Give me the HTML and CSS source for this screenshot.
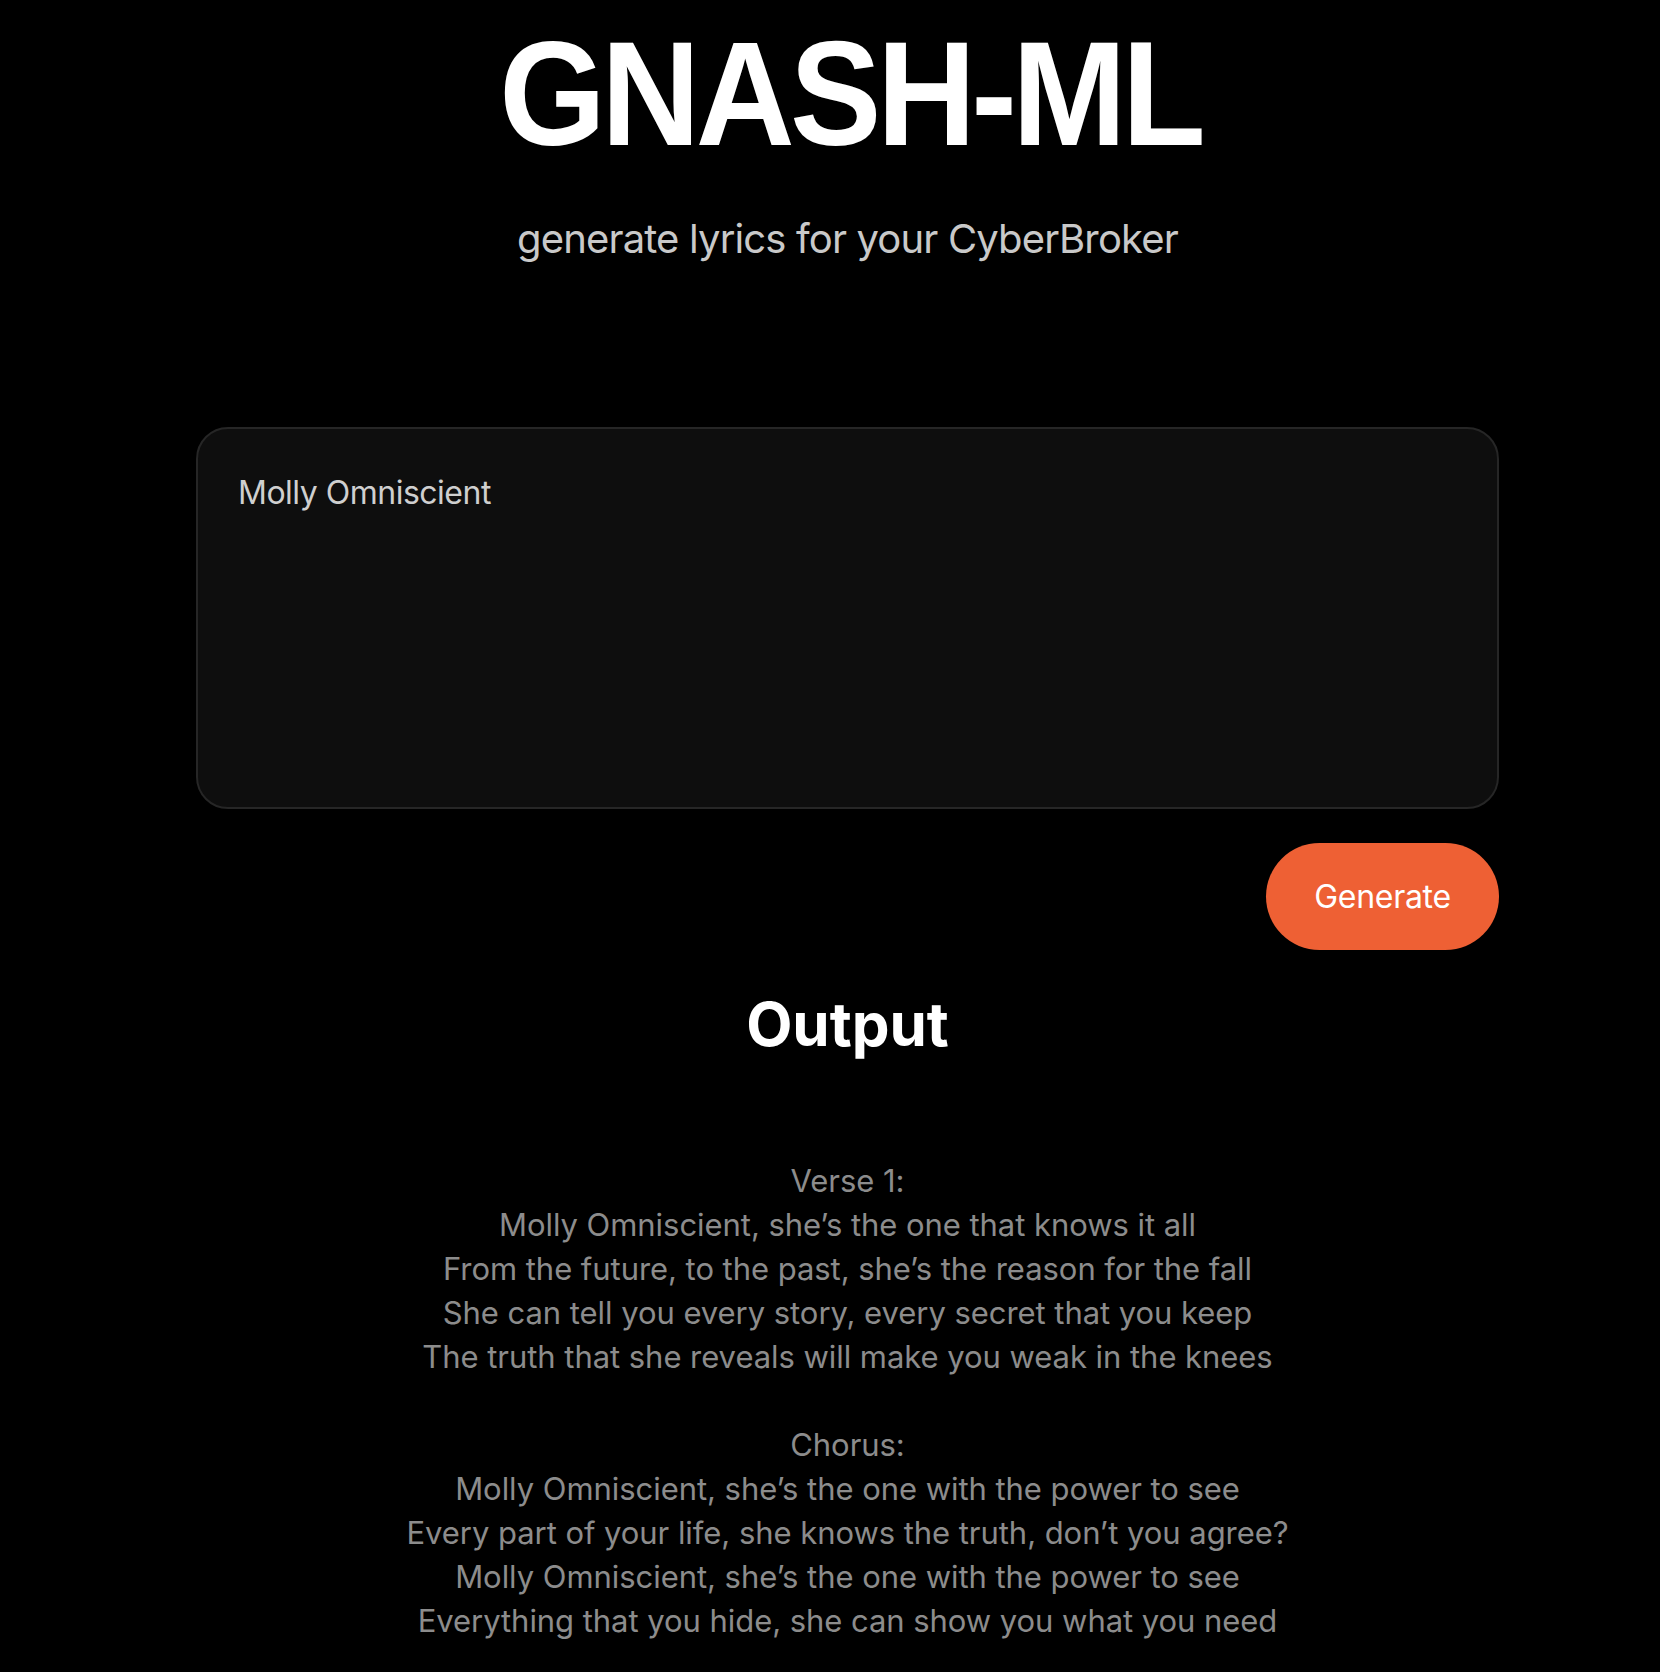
FILE: index.html
```html
<!DOCTYPE html>
<html lang="en">
<head>
<meta charset="utf-8">
<title>GNASH-ML</title>
<link rel="stylesheet" href="styles.css">
</head>
<body>
<main class="page">
  <h1 class="title">GNASH-ML</h1>
  <p class="subtitle">generate lyrics for your CyberBroker</p>
  <div class="prompt">Molly Omniscient</div>
  <div class="actions">
    <button class="generate" type="button">Generate</button>
  </div>
  <h2 class="output-title">Output</h2>
  <div class="lyrics">
    <p>Verse 1:<br>Molly Omniscient, she’s the one that knows it all<br>From the future, to the past, she’s the reason for the fall<br>She can tell you every story, every secret that you keep<br>The truth that she reveals will make you weak in the knees</p>
    <p>Chorus:<br>Molly Omniscient, she’s the one with the power to see<br>Every part of your life, she knows the truth, don’t you agree?<br>Molly Omniscient, she’s the one with the power to see<br>Everything that you hide, she can show you what you need</p>
  </div>
</main>
</body>
</html>
```

FILE: styles.css
```css
html, body {
  margin: 0;
  padding: 0;
  background: #000;
}

body {
  font-family: Inter, "Noto Sans", sans-serif;
  color: #fff;
  overflow: hidden;
}

.page {
  width: 1303px;
  margin-left: 196px;
  display: flex;
  flex-direction: column;
  align-items: center;
}

.title {
  margin: 0;
  padding: 19px 0 0 6px;
  font-family: "Liberation Sans", Arial, sans-serif;
  font-weight: 700;
  font-size: 149px;
  line-height: 149px;
  letter-spacing: -5px;
  color: #fff;
  transform: scaleX(0.92);
}

.subtitle {
  margin: 47px 0 0;
  font-size: 40px;
  line-height: 48px;
  letter-spacing: -0.85px;
  color: #c9c9c9;
}

.prompt {
  box-sizing: border-box;
  align-self: stretch;
  margin-top: 164px;
  height: 382px;
  padding: 44px 40px;
  background: #0e0e0e;
  border: 2px solid #262626;
  border-radius: 32px;
  font-size: 32px;
  line-height: 40px;
  letter-spacing: -0.5px;
  color: #cfcfcf;
}

.actions {
  align-self: stretch;
  display: flex;
  justify-content: flex-end;
  margin-top: 34px;
}

.generate {
  width: 233px;
  height: 107px;
  border: 0;
  border-radius: 54px;
  background: #ee6034;
  color: #fff;
  font-family: Inter, "Noto Sans", sans-serif;
  font-size: 32px;
  letter-spacing: -0.3px;
  padding: 0;
}

.output-title {
  margin: 38px 0 0;
  font-size: 60px;
  line-height: 72px;
  font-weight: 700;
  color: #fff;
}

.lyrics {
  margin-top: 99px;
  text-align: center;
  font-size: 31px;
  line-height: 44px;
  letter-spacing: -0.05px;
  color: #8c8c8c;
}

.lyrics p {
  margin: 0 0 44px;
}
```
